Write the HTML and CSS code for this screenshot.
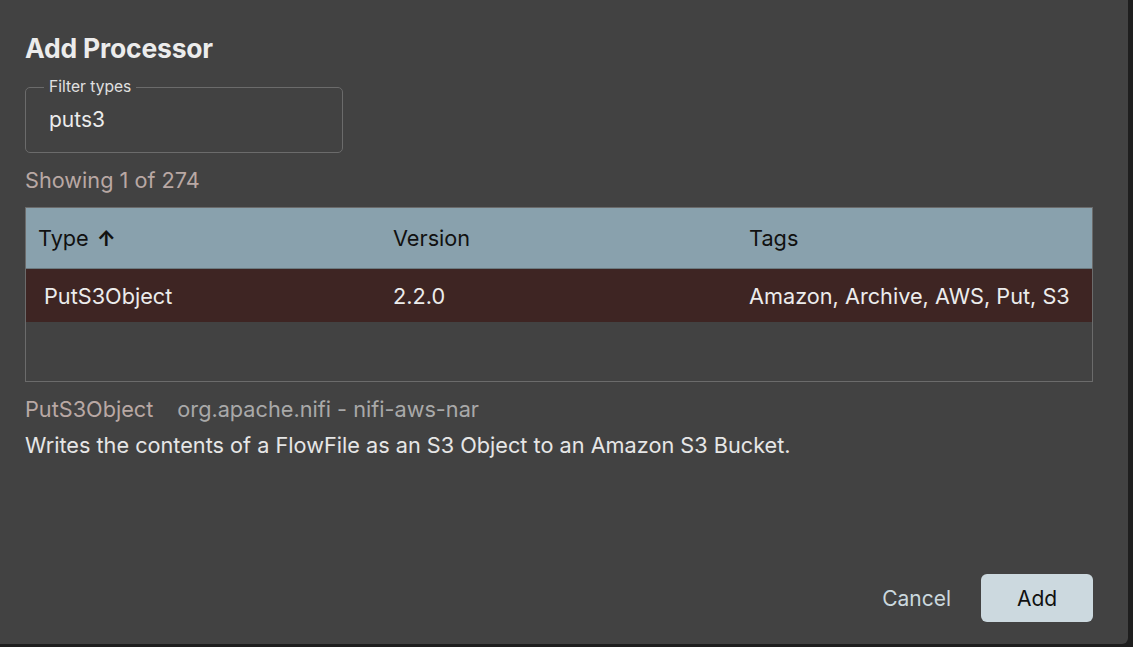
FILE: index.html
```html
<!DOCTYPE html>
<html>
<head>
<meta charset="utf-8">
<link rel="stylesheet" href="styles.css">
</head>
<body>
<div class="screen">
  <div class="dialog">
    <h1 class="title">Add Processor</h1>
    <div class="field">
      <span class="field-label">Filter types</span>
      <span class="field-value">puts3</span>
    </div>
    <div class="count">Showing 1 of 274</div>
    <div class="table">
      <div class="row head">
        <div class="cell c1">Type <span class="arrow">&#8593;</span></div>
        <div class="cell c2">Version</div>
        <div class="cell c3">Tags</div>
      </div>
      <div class="row sel">
        <div class="cell c1 first">PutS3Object</div>
        <div class="cell c2">2.2.0</div>
        <div class="cell c3">Amazon, Archive, AWS, Put, S3</div>
      </div>
    </div>
    <div class="meta">
      <span class="meta-name">PutS3Object</span>
      <span class="meta-bundle">org.apache.nifi - nifi-aws-nar</span>
    </div>
    <div class="desc">Writes the contents of a FlowFile as an S3 Object to an Amazon S3 Bucket.</div>
    <div class="actions">
      <button class="btn-cancel">Cancel</button>
      <button class="btn-add">Add</button>
    </div>
  </div>
</div>
</body>
</html>
```
FILE: styles.css
```css
html, body {
  margin: 0;
  padding: 0;
  background: #1e1e1e;
  font-family: Inter, "Noto Sans", sans-serif;
}
.screen {
  width: 1133px;
  height: 647px;
  overflow: hidden;
}
.dialog {
  width: 1128px;
  height: 644px;
  box-sizing: border-box;
  background: #424242;
  border-radius: 0 0 6px 0;
  padding: 32px 35px 0 25px;
  display: flex;
  flex-direction: column;
}
.title {
  margin: 0;
  font-size: 26.5px;
  font-weight: 700;
  color: #ececec;
  line-height: 32px;
  letter-spacing: -0.2px;
}
.field {
  margin-top: 23px;
  width: 318px;
  height: 66px;
  box-sizing: border-box;
  border: 1px solid #6b6b6b;
  border-radius: 5px;
  position: relative;
  display: flex;
  align-items: center;
  padding: 0 23px;
}
.field-label {
  position: absolute;
  top: -10px;
  left: 18px;
  padding: 0 5px;
  background: #424242;
  font-size: 15.6px;
  line-height: 18px;
  color: #e0e0e0;
}
.field-value {
  font-size: 21px;
  color: #ececec;
  margin-top: -1px;
}
.count {
  margin-top: 15px;
  font-size: 21.7px;
  line-height: 24px;
  color: #b9a8a4;
}
.table {
  margin-top: 15px;
  width: 1068px;
  height: 175px;
  box-sizing: border-box;
  border: 1px solid #6b6b6b;
}
.row {
  display: flex;
  align-items: center;
}
.head {
  height: 61px;
  background: #89a1ad;
  color: #111;
  border-bottom: 1px solid #6b7a80;
  box-sizing: border-box;
}
.sel {
  height: 53px;
  background: #3e2523;
  color: #ececec;
}
.cell {
  font-size: 21.7px;
  line-height: 24px;
}
.c1 { width: 355px; padding-left: 12px; }
.c1.first { padding-left: 18px; width: 349px; }
.c2 { width: 356px; }
.c3 { flex: 1; }
.arrow {
  font-weight: 700;
  font-size: 21px;
  margin-left: 2px;
}
.meta {
  margin-top: 15px;
  font-size: 21.7px;
  line-height: 24px;
  display: flex;
  gap: 24px;
}
.meta-name { color: #b9a8a4; }
.meta-bundle { color: #a9a9a9; }
.desc {
  margin-top: 12px;
  font-size: 21.7px;
  line-height: 24px;
  color: #e6e6e6;
}
.actions {
  margin-top: auto;
  margin-bottom: 22px;
  display: flex;
  justify-content: flex-end;
  align-items: center;
  gap: 30px;
}
.btn-cancel {
  background: none;
  border: none;
  font-family: inherit;
  font-size: 21px;
  color: #cbd8de;
  padding: 0;
}
.btn-add {
  width: 112px;
  height: 48px;
  border: none;
  border-radius: 6px;
  background: #ccd9df;
  color: #111;
  font-family: inherit;
  font-size: 21px;
}
```
